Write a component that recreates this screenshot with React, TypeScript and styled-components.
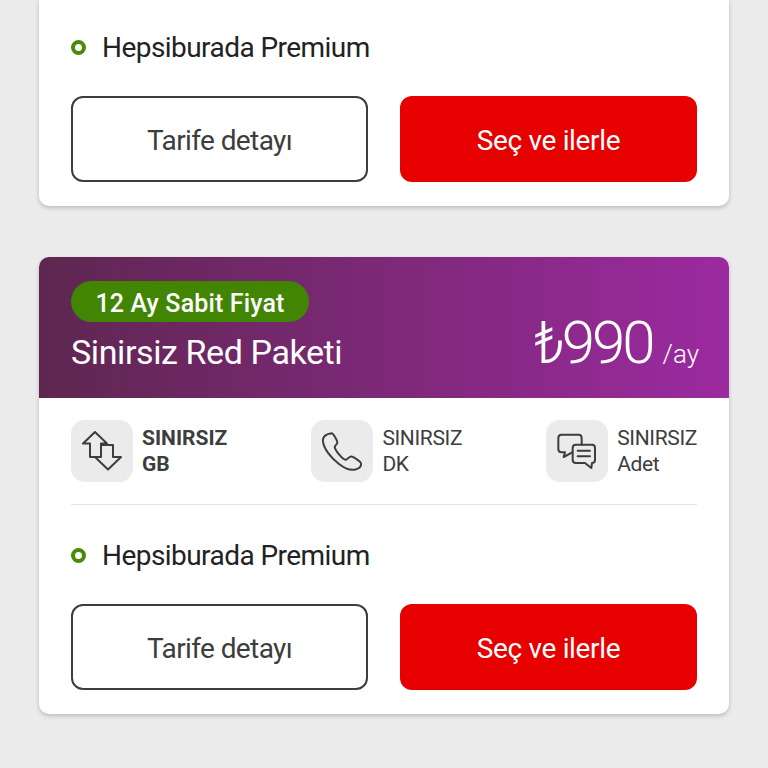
import React from "react";
import styled, { createGlobalStyle } from "styled-components";

const Global = createGlobalStyle`
  html, body { margin: 0; padding: 0; background: #ebebeb; }
  body { font-family: "Roboto", "Open Sans", sans-serif; }
`;

const Page = styled.div`
  width: 768px;
  height: 768px;
  overflow: hidden;
  box-sizing: border-box;
  padding: 0 39px;
  background: #ebebeb;
  display: flex;
  flex-direction: column;
  gap: 51px;
`;

const Card = styled.section<{ $clipped?: boolean }>`
  background: #fff;
  border-radius: ${(p) => (p.$clipped ? "0 0 10px 10px" : "10px")};
  box-shadow: 0 2px 4px rgba(0, 0, 0, 0.2);
  overflow: hidden;
  flex: none;
`;

const Header = styled.header`
  height: 141px;
  box-sizing: border-box;
  padding: 24px 30px 0 32px;
  background: linear-gradient(90deg, #5e2750 0%, #9c2aa0 100%);
  color: #fff;
  display: flex;
  justify-content: space-between;
  align-items: flex-end;
`;

const HeaderLeft = styled.div`
  display: flex;
  flex-direction: column;
  align-items: flex-start;
  align-self: flex-start;
`;

const Badge = styled.div`
  height: 41px;
  width: 238px;
  box-sizing: border-box;
  padding-top: 3px;
  border-radius: 21px;
  background: #428503;
  display: flex;
  align-items: center;
  justify-content: center;
  font-size: 25px;
  font-weight: 500;
  letter-spacing: 0.15px;
`;

const Title = styled.h2`
  margin: 6px 0 0;
  font-size: 34px;
  line-height: 48px;
  font-weight: 400;
  letter-spacing: -0.4px;
`;

const Price = styled.div`
  display: flex;
  align-items: baseline;
  margin-bottom: 12px;
  font-size: 60px;
  line-height: 64px;
  font-weight: 300;
  letter-spacing: -3px;
`;

const PriceUnit = styled.span`
  font-size: 26px;
  margin-left: 10px;
  letter-spacing: 0;
`;

const Features = styled.div`
  margin: 22px 32px 0;
  padding-bottom: 22px;
  border-bottom: 1px solid #e4e4e4;
  display: flex;
  justify-content: space-between;
`;

const Feature = styled.div`
  display: flex;
  align-items: center;
  gap: 9px;
`;

const IconBox = styled.div`
  width: 62px;
  height: 62px;
  border-radius: 14px;
  background: #ebebeb;
  display: flex;
  align-items: center;
  justify-content: center;
  color: #3d3d3d;
`;

const FeatureText = styled.div<{ $bold?: boolean }>`
  font-size: 21px;
  line-height: 26px;
  color: #3d3d3d;
  font-weight: ${(p) => (p.$bold ? 700 : 400)};
  letter-spacing: ${(p) => (p.$bold ? "0" : "-0.35px")};
`;

const Perk = styled.div<{ $first?: boolean }>`
  margin: ${(p) => (p.$first ? "28px" : "31px")} 32px 0;
  display: flex;
  align-items: center;
  gap: 16px;
  font-size: 28px;
  line-height: 40px;
  letter-spacing: -0.55px;
  color: #222;
`;

const Dot = styled.span`
  width: 15px;
  height: 15px;
  box-sizing: border-box;
  border: 4.5px solid #4a8a0a;
  border-radius: 50%;
  background: #fff;
  margin-top: -2px;
`;

const Actions = styled.div`
  margin: 28px 32px 24px;
  display: grid;
  grid-template-columns: 297px 297px;
  justify-content: space-between;
`;

const Button = styled.button<{ $primary?: boolean }>`
  height: 86px;
  box-sizing: border-box;
  padding: 2px 0 0;
  border-radius: 12px;
  font-family: inherit;
  font-size: 28px;
  letter-spacing: ${(p) => (p.$primary ? "-0.35px" : "-0.6px")};
  background: ${(p) => (p.$primary ? "#e60000" : "#fff")};
  color: ${(p) => (p.$primary ? "#fff" : "#3d3d3d")};
  border: ${(p) => (p.$primary ? "none" : "2px solid #3d3d3d")};
`;

const DataIcon = () => (
  <svg width="40" height="40" viewBox="0 0 40 40" fill="none" stroke="currentColor" strokeWidth="2" strokeLinejoin="round">
    <path d="M13 1 L1 12.5 H8 V26 H19 V12.5 H25 Z" />
    <path d="M19 14 H31 V26 H39 L26 38.5 L13 26 H19" />
  </svg>
);

const PhoneIcon = () => (
  <svg width="40" height="39" viewBox="40 40 120 118" fill="none" stroke="currentColor" strokeWidth="6" strokeLinejoin="round">
    <path d="M68 44 C55 46 42 52 42 66 C44 90 66 118 90 136 C105 148 122 156 138 154 C148 152 158 146 158 136 C158 130 134 114 128 114 C120 114 118 124 110 124 C100 122 80 96 78 86 C78 80 86 78 86 72 C86 66 74 44 68 44 Z" />
  </svg>
);

const ChatIcon = () => (
  <svg width="40" height="36" viewBox="38 50 120 108" fill="none" stroke="currentColor" strokeWidth="6" strokeLinejoin="round" strokeLinecap="round">
    <path d="M84 108 L58 122 L62 108 H52 Q42 108 42 98 V65 Q42 55 52 55 H102 Q112 55 112 65 V85" />
    <path d="M95 85 H143 Q152 85 152 95 V130 Q152 140 143 140 L141 155 L122 140 H95 Q85 140 85 130 V95 Q85 85 95 85 Z" />
    <path d="M100 103 H137 M100 120 H137" />
  </svg>
);

const PerkRow = ({ first }: { first?: boolean }) => (
  <Perk $first={first}>
    <Dot />
    Hepsiburada Premium
  </Perk>
);

const ActionRow = () => (
  <Actions>
    <Button>Tarife detayı</Button>
    <Button $primary>Seç ve ilerle</Button>
  </Actions>
);

export default function App() {
  return (
    <Page>
      <Global />
      <Card $clipped>
        <PerkRow first />
        <ActionRow />
      </Card>
      <Card>
        <Header>
          <HeaderLeft>
            <Badge>12 Ay Sabit Fiyat</Badge>
            <Title>Sinirsiz Red Paketi</Title>
          </HeaderLeft>
          <Price>
            ₺990<PriceUnit>/ay</PriceUnit>
          </Price>
        </Header>
        <Features>
          <Feature>
            <IconBox><DataIcon /></IconBox>
            <FeatureText $bold>SINIRSIZ<br />GB</FeatureText>
          </Feature>
          <Feature>
            <IconBox><PhoneIcon /></IconBox>
            <FeatureText>SINIRSIZ<br />DK</FeatureText>
          </Feature>
          <Feature>
            <IconBox><ChatIcon /></IconBox>
            <FeatureText>SINIRSIZ<br />Adet</FeatureText>
          </Feature>
        </Features>
        <PerkRow />
        <ActionRow />
      </Card>
    </Page>
  );
}
